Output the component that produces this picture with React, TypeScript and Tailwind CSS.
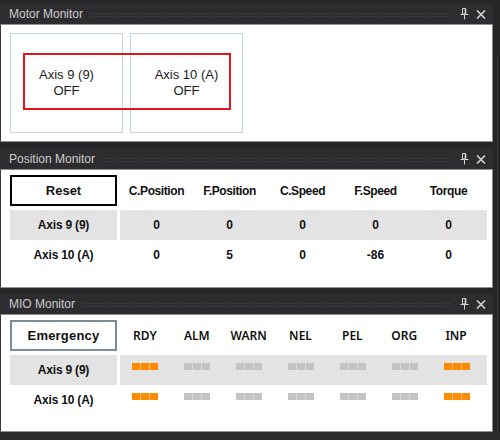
import React from 'react';

const FONT = { fontFamily: '"Liberation Sans", Arial, sans-serif' };

function PinIcon() {
    return (
        <svg width="9" height="12" viewBox="0 0 9 12" fill="none" stroke="#d4d4d4" strokeWidth="1">
            <path d="M2.5 0.5h3v5.5h-3z" />
            <path d="M5.5 0.5v5.5" strokeWidth="1.6" />
            <path d="M0.5 6.5h8" />
            <path d="M4.5 6.5v5" />
        </svg>
    );
}

function CloseIcon() {
    return (
        <svg width="10" height="9" viewBox="0 0 10 9" fill="none" stroke="#d4d4d4" strokeWidth="1.6">
            <path d="M1 0.5l8 8M9 0.5l-8 8" />
        </svg>
    );
}

interface PanelProps {
    title: string;
    height: string;
    children: React.ReactNode;
}

function Panel({ title, height, children }: PanelProps) {
    return (
        <div className="flex flex-col">
            {/* Dock title bar */}
            <div className="h-[20px] bg-[#2d2d30] flex items-center pl-[9px] pr-[7px]">
                <span className="text-[12px] text-[#cccccc] leading-none whitespace-nowrap">{title}</span>
                <div className="flex-1 h-[5px] ml-[6px] mr-[11px] bg-[radial-gradient(#4c4c52_0.9px,transparent_1px)] bg-[length:3px_3px]"></div>
                <PinIcon />
                <div className="w-[7px]"></div>
                <CloseIcon />
            </div>
            <div className={`bg-white border border-[#8e8e8e] border-l-[#3a3a3a] relative ${height}`}>
                {children}
            </div>
        </div>
    );
}

function MotorBox({ name }: { name: string }) {
    return (
        <div className="w-[113px] h-[100px] border border-[#c6d3e3] flex flex-col items-center justify-center text-[13px] leading-[16px] text-[#1b1b1b]">
            <span>{name}</span>
            <span>OFF</span>
        </div>
    );
}

const posHeaders = ['C.Position', 'F.Position', 'C.Speed', 'F.Speed', 'Torque'];
const posRows = [
    { name: 'Axis 9 (9)', values: ['0', '0', '0', '0', '0'] },
    { name: 'Axis 10 (A)', values: ['0', '5', '0', '-86', '0'] },
];

const mioHeaders = ['RDY', 'ALM', 'WARN', 'NEL', 'PEL', 'ORG', 'INP'];
const mioRows = [
    { name: 'Axis 9 (9)', on: [true, false, false, false, false, false, true] },
    { name: 'Axis 10 (A)', on: [true, false, false, false, false, false, true] },
];

function Led({ on }: { on: boolean }) {
    return (
        <div className={`flex gap-px h-[7px] w-[26px] ${on ? 'bg-[#ffbf7a]' : 'bg-[#dadada]'}`}>
            <div className={`flex-1 ${on ? 'bg-[#ff8a00]' : 'bg-[#c3c3c3]'}`}></div>
            <div className={`flex-1 ${on ? 'bg-[#ff8a00]' : 'bg-[#c3c3c3]'}`}></div>
            <div className={`flex-1 ${on ? 'bg-[#ff8a00]' : 'bg-[#c3c3c3]'}`}></div>
        </div>
    );
}

export default function App() {
    return (
        <div className="w-[500px] h-[440px] bg-[#262628] relative overflow-hidden pt-[4px]" style={FONT}>
            <div className="w-[493px] flex flex-col">
                {/* Motor Monitor */}
                <Panel title="Motor Monitor" height="h-[118px]">
                    <div className="flex gap-[7px] pl-[9px] pt-[8px]">
                        <MotorBox name="Axis 9 (9)" />
                        <MotorBox name="Axis 10 (A)" />
                    </div>
                    <div className="absolute left-[22px] top-[28px] w-[208px] h-[57px] border-[2px] border-[#e3141e] pointer-events-none"></div>
                </Panel>

                <div className="h-[7px]"></div>

                {/* Position Monitor */}
                <Panel title="Position Monitor" height="h-[119px]">
                    <div className="flex flex-col pl-[9px] pt-[5px] text-[#111]">
                        <div className="flex h-[31px]">
                            <div className="w-[107px] border-[2px] border-black flex items-center justify-center text-[13px] font-bold">
                                Reset
                            </div>
                            <div className="ml-[3px] w-[367px] pr-[2px] grid grid-cols-5 items-center text-[12px] font-bold tracking-[-0.4px]">
                                {posHeaders.map((h) => (
                                    <span key={h} className="text-center">{h}</span>
                                ))}
                            </div>
                        </div>
                        <div className="h-[4px]"></div>
                        {posRows.map((row, i) => (
                            <div key={row.name} className="flex h-[30px] text-[12px] font-bold">
                                <div className={`w-[107px] flex items-center justify-center tracking-[-0.2px] ${i === 0 ? 'bg-[#e3e3e3]' : ''}`}>
                                    {row.name}
                                </div>
                                <div className={`ml-[3px] w-[367px] pr-[2px] grid grid-cols-5 items-center ${i === 0 ? 'bg-[#e3e3e3]' : ''}`}>
                                    {row.values.map((v, j) => (
                                        <span key={j} className="text-center">{v}</span>
                                    ))}
                                </div>
                            </div>
                        ))}
                    </div>
                </Panel>

                <div className="h-[6px]"></div>

                {/* MIO Monitor */}
                <Panel title="MIO Monitor" height="h-[118px]">
                    <div className="flex flex-col pl-[9px] pt-[5px] text-[#111]">
                        <div className="flex h-[31px]">
                            <div className="w-[107px] border-[2px] border-[#7d8a9a] flex items-center justify-center text-[13px] font-bold tracking-[0.2px]">
                                Emergency
                            </div>
                            <div
                                className="ml-[2px] w-[366px] pr-[3px] grid grid-cols-7 items-center text-[12px] font-semibold"
                                style={{ fontFamily: '"Noto Sans", sans-serif' }}
                            >
                                {mioHeaders.map((h) => (
                                    <span key={h} className="text-center">{h}</span>
                                ))}
                            </div>
                        </div>
                        <div className="h-[4px]"></div>
                        {mioRows.map((row, i) => (
                            <div key={row.name} className="flex h-[30px] text-[12px] font-bold">
                                <div className={`w-[107px] flex items-center justify-center tracking-[-0.2px] ${i === 0 ? 'bg-[#e3e3e3]' : ''}`}>
                                    {row.name}
                                </div>
                                <div className={`ml-[3px] w-[367px] pr-[4px] grid grid-cols-7 items-start pt-[8px] ${i === 0 ? 'bg-[#e3e3e3]' : ''}`}>
                                    {row.on.map((on, j) => (
                                        <div key={j} className="flex justify-center -ml-[1px]">
                                            <Led on={on} />
                                        </div>
                                    ))}
                                </div>
                            </div>
                        ))}
                    </div>
                </Panel>
            </div>

            {/* right edge track line */}
            <div className="absolute left-[497px] top-[57px] bottom-0 w-px bg-[#3c3c40]"></div>
            {/* bottom status strip */}
            <div className="absolute left-0 right-0 bottom-0 h-[8px] bg-[#2a2a2c]"></div>
        </div>
    );
}
